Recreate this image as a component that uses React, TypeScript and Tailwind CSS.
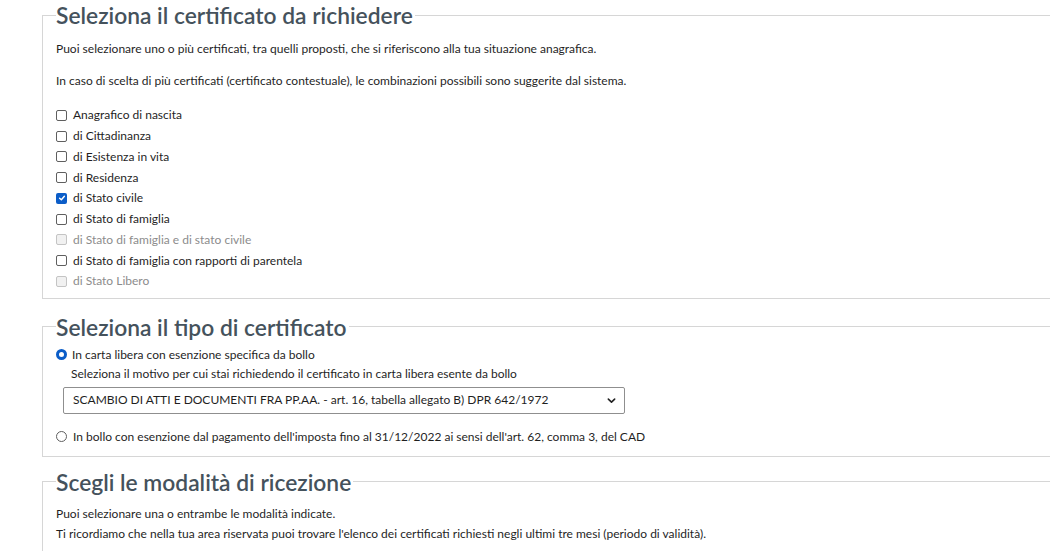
const certificati = [
  { label: "Anagrafico di nascita" },
  { label: "di Cittadinanza" },
  { label: "di Esistenza in vita" },
  { label: "di Residenza" },
  { label: "di Stato civile", checked: true },
  { label: "di Stato di famiglia" },
  { label: "di Stato di famiglia e di stato civile", disabled: true },
  { label: "di Stato di famiglia con rapporti di parentela" },
  { label: "di Stato Libero", disabled: true },
];

function Checkbox({ checked, disabled }: { checked?: boolean; disabled?: boolean }) {
  if (checked)
    return (
      <span className="flex h-[11px] w-[11px] items-center justify-center rounded-[2px] bg-[#0b5dc8]">
        <svg viewBox="0 0 10 10" className="h-[8px] w-[8px]">
          <path d="M2 5.2 L4.2 7.2 L8 2.8" fill="none" stroke="white" strokeWidth="1.8" strokeLinecap="round" strokeLinejoin="round" />
        </svg>
      </span>
    );
  return (
    <span
      className={`h-[11px] w-[11px] rounded-[2px] border ${disabled ? "border-[#c4c4c4] bg-[#f1f1f1]" : "border-[#5f5f5f] bg-white"}`}
    />
  );
}

function Radio({ checked }: { checked?: boolean }) {
  if (checked) return <span className="h-[11px] w-[11px] rounded-full border-[3px] border-[#0b5dc8] bg-white" />;
  return <span className="h-[11px] w-[11px] rounded-full border border-[#5f5f5f] bg-white" />;
}

function Section({ title, children, className = "" }: { title: string; children: React.ReactNode; className?: string }) {
  return (
    <fieldset className={`border border-[#d6d6d6] pl-[13px] ${className}`}>
      <legend className="pr-[2px] text-[22.8px] font-semibold leading-[28px] text-[#45525c]">{title}</legend>
      {children}
    </fieldset>
  );
}

export default function App() {
  return (
    <div className="h-[551px] w-[1050px] overflow-hidden bg-white pt-px" style={{ fontFamily: "Lato, 'Open Sans', sans-serif" }}>
      <div className="ml-[42px] w-[1100px] text-[12px] text-[#1f1f1f]">
        <Section title="Seleziona il certificato da richiedere" className="pb-[6px]">
          <p className="mt-[10px] leading-[20px]">
            Puoi selezionare uno o più certificati, tra quelli proposti, che si riferiscono alla tua situazione anagrafica.
          </p>
          <p className="mt-[12px] leading-[20px]">
            In caso di scelta di più certificati (certificato contestuale), le combinazioni possibili sono suggerite dal sistema.
          </p>
          <ul className="mt-[14px]">
            {certificati.map((c) => (
              <li key={c.label} className={`flex h-[20.75px] items-center gap-[6px] ${c.disabled ? "text-[#8c8c8c]" : ""}`}>
                <Checkbox checked={c.checked} disabled={c.disabled} />
                <span>{c.label}</span>
              </li>
            ))}
          </ul>
        </Section>

        <Section title="Seleziona il tipo di certificato" className="mt-[14px] pb-[9px]">
          <div className="mt-[4px] flex h-[20px] items-center gap-[5px]">
            <Radio checked />
            <span>In carta libera con esenzione specifica da bollo</span>
          </div>
          <div className="pl-[15px]">
            <p className="leading-[18px]">Seleziona il motivo per cui stai richiedendo il certificato in carta libera esente da bollo</p>
            <div className="mt-[4px] ml-[-8px] flex h-[27px] w-[562px] items-center justify-between rounded-[2px] border border-[#8f8f8f] pl-[9px] pr-[8px]">
              <span>SCAMBIO DI ATTI E DOCUMENTI FRA PP.AA. - art. 16, tabella allegato B) DPR 642/1972</span>
              <svg viewBox="0 0 10 10" className="h-[9px] w-[9px]">
                <path d="M1.5 3.5 L5 6.8 L8.5 3.5" fill="none" stroke="#222" strokeWidth="1.8" strokeLinecap="round" strokeLinejoin="round" />
              </svg>
            </div>
          </div>
          <div className="mt-[13px] flex h-[20px] items-center gap-[6px]">
            <Radio />
            <span>In bollo con esenzione dal pagamento dell'imposta fino al 31/12/2022 ai sensi dell'art. 62, comma 3, del CAD</span>
          </div>
        </Section>

        <Section title="Scegli le modalità di ricezione" className="mt-[11px] pb-[20px]">
          <p className="mt-[8px] leading-[20px]">Puoi selezionare una o entrambe le modalità indicate.</p>
          <p className="leading-[20px]">
            Ti ricordiamo che nella tua area riservata puoi trovare l'elenco dei certificati richiesti negli ultimi tre mesi (periodo di validità).
          </p>
        </Section>
      </div>
    </div>
  );
}
